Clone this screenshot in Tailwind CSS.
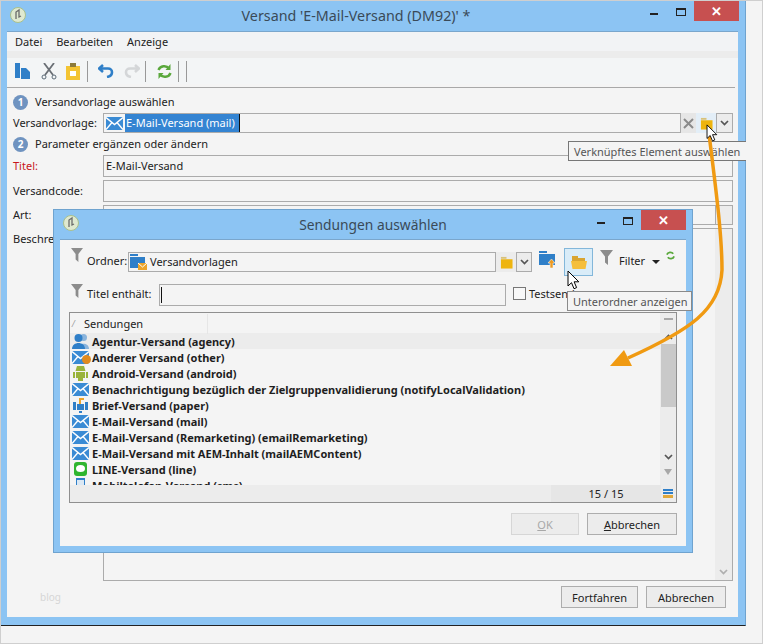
<!DOCTYPE html>
<html lang="de">
<head>
<meta charset="UTF-8">
<title>Versand</title>
<script src="https://cdn.jsdelivr.net/npm/@tailwindcss/browser@4"></script>
</head>
<body class="bg-[#f4f4f4]">
<svg width="0" height="0" class="absolute">
  <defs>
    <symbol id="mail" viewBox="0 0 17 13">
      <rect width="17" height="13" fill="#3a8bd4"/>
      <path d="M0 .5 8.500 7.500 17 .5M0 12.500 6 5.500M17 12.500 11 5.500" fill="none" stroke="#fff" stroke-width="1.400"/>
    </symbol>
    <symbol id="folder" viewBox="0 0 14 14">
      <path d="M1 1h6v2H1z" fill="#d9c27a"/>
      <path d="M1 3.500h12.500V13.500H1z" fill="#eeb40e"/>
    </symbol>
    <symbol id="funnel" viewBox="0 0 13 15">
      <path d="M0 0h13L8 6.500V15L5 12.500V6.500z" fill="#8c8c8c"/>
    </symbol>
    <symbol id="chev" viewBox="0 0 9 6">
      <path d="M1 1l3.500 3.500L8 1" fill="none" stroke="#555" stroke-width="1.700"/>
    </symbol>
    <symbol id="app" viewBox="0 0 16 16">
      <circle cx="8" cy="8" r="7.500" fill="#dfe9d0" stroke="#a9c08c"/>
      <path d="M6 12V5l3-2v7l2-1" fill="none" stroke="#6b6b6b" stroke-width="1.300"/>
    </symbol>
    <symbol id="cursor" viewBox="0 0 13 21">
      <path d="M1 1v15l3.500-3.300 2.500 6 2.600-1.100-2.500-5.800h4.700z" fill="#fff" stroke="#000" stroke-width="1"/>
    </symbol>
  </defs>
</svg>

<div class="relative w-[763px] h-[644px] overflow-hidden bg-[#f4f4f4] font-['Noto_Sans',sans-serif] text-[11px] leading-none text-[#222]">

  <!-- Hauptfenster -->
  <div class="absolute left-0 top-[1px] w-[746px] h-[625px] bg-[#8cc4f3] border-b border-b-[#222] border-r border-r-[#6fa3cf]">
    <div class="relative h-[30px] flex items-center justify-center text-[14.300px] text-[#3a4a58]">
      <svg class="absolute left-[10px] top-[6px] w-[16px] h-[16px]"><use href="#app"/></svg>
      <span class="ml-[-33px]">Versand 'E-Mail-Versand (DM92)' *</span>
      <div class="absolute left-[650px] top-0 flex items-start">
        <div class="w-[8px] h-[2px] bg-[#222] mt-[12px] mr-[18px]"></div>
        <div class="w-[10px] h-[8px] border border-[#222] border-t-2 mt-[7px] mr-[8px]"></div>
        <div class="w-[45px] h-[20px] bg-[#c75050] text-white text-[13px] font-bold flex items-center justify-center">✕</div>
      </div>
    </div>
    <div class="mx-[7px] h-[586px] bg-[#f4f4f4] border-t border-[#7aa6cc] relative">
      <div class="h-[19px] bg-[#f2f3f5] flex items-center gap-[14px] pl-[8px]">
        <span>Datei</span><span>Bearbeiten</span><span>Anzeige</span>
      </div>
      <div class="h-[7px] bg-[#ececec]"></div>
      <div class="h-[26px] bg-[#f3f5f6] flex items-center pl-[8px]">
        <svg class="w-[15px] h-[16px]" viewBox="0 0 15 16"><path d="M0 0h5v15H0zM6 5h5l4 4v7H6z" fill="#2f7fc8"/></svg>
        <svg class="w-[16px] h-[17px] ml-[11px]" viewBox="0 0 16 17"><path d="M3 0l9 12M13 0 4 12" stroke="#6a6f75" stroke-width="1.800" fill="none"/><circle cx="3" cy="14" r="2" fill="none" stroke="#5b6b78"/><circle cx="13" cy="14" r="2" fill="none" stroke="#5b6b78"/></svg>
        <svg class="w-[14px] h-[17px] ml-[9px]" viewBox="0 0 14 17"><path d="M0 3h14v14H0z" fill="#f3c433"/><path d="M4 0h6v4H4z" fill="#8c7a3a"/><path d="M4 8h6v5H4z" fill="#fff"/></svg>
        <div class="w-px h-[21px] bg-[#999] ml-[7px]"></div>
        <svg class="w-[17px] h-[14px] ml-[10px]" viewBox="0 0 17 14"><path d="M5 1 1 4.500 5 8M1.500 4.500H10c5 0 6 7-1 8.500" fill="none" stroke="#2f7fc8" stroke-width="2.600"/></svg>
        <svg class="w-[17px] h-[14px] ml-[8px]" viewBox="0 0 17 14"><path d="M12 1l4 3.500L12 8M15.500 4.500H7c-5 0-6 7 1 8.500" fill="none" stroke="#d4d6d8" stroke-width="2.600"/></svg>
        <div class="w-px h-[21px] bg-[#999] ml-[5px]"></div>
        <svg class="w-[15px] h-[15px] ml-[11px]" viewBox="0 0 15 15"><path d="M1.500 6C3 1.500 9.500 1 12 4.500M13.500 9C12 13.500 5.500 14 3 10.500" fill="none" stroke="#5aa83c" stroke-width="2.400"/><path d="M13.500 0v6h-5zM1.500 15V9h5z" fill="#5aa83c"/></svg>
        <div class="w-px h-[21px] bg-[#999] ml-[6px]"></div>
        <div class="w-px h-[21px] bg-[#999] ml-[7px]"></div>
      </div>
      <div class="h-px bg-[#a8a8a8] mt-[3px] mr-[3px]"></div>

      <div class="flex items-center h-[16px] mt-[6px] pl-[6px]">
        <div class="w-[15px] h-[15px] rounded-full bg-[#6f93c0] text-white font-bold text-[10px] flex items-center justify-center">1</div>
        <span class="ml-[7px] pb-[2px]">Versandvorlage auswählen</span>
      </div>
      <div class="flex items-center h-[20px] mt-[3px] pl-[6px]">
        <span class="w-[90px] pb-[1px]">Versandvorlage:</span>
        <div class="w-[578px] h-[20px] border border-[#ababab] flex items-center pl-[1px]">
          <svg class="w-[17px] h-[13px] ml-[1px]"><use href="#mail"/></svg>
          <span class="bg-[#3484d2] text-white h-[18px] flex items-center ml-[2px] pl-[1px] pr-[4px] pb-[1px] border-r border-[#111]">E-Mail-Versand (mail)</span>
        </div>
        <div class="w-[15px] h-[20px] bg-[#e6e6e6] flex items-center justify-center">
          <svg class="w-[11px] h-[11px]" viewBox="0 0 11 11"><path d="M1 1l9 9M10 1l-9 9" stroke="#8a8a8a" stroke-width="2"/></svg>
        </div>
        <div class="w-[20px] h-[20px] bg-[#e3eef7] flex items-center justify-center">
          <svg class="w-[13px] h-[13px]"><use href="#folder"/></svg>
        </div>
        <div class="w-[17px] h-[20px] bg-[#ececec] border border-[#ababab] flex items-center justify-center">
          <svg class="w-[9px] h-[6px]"><use href="#chev"/></svg>
        </div>
      </div>
      <div class="flex items-center h-[16px] mt-[3px] pl-[6px]">
        <div class="w-[15px] h-[15px] rounded-full bg-[#6f93c0] text-white font-bold text-[10px] flex items-center justify-center">2</div>
        <span class="ml-[7px] pb-[2px]">Parameter ergänzen oder ändern</span>
      </div>
      <div class="flex items-center h-[22px] mt-[3px] pl-[6px]">
        <span class="w-[90px] text-[#c8161d] pb-[2px]">Titel:</span>
        <div class="w-[630px] h-[22px] border border-[#ababab] flex items-center pl-[2px] pb-[2px]">E-Mail-Versand</div>
      </div>
      <div class="flex items-center h-[22px] mt-[3px] pl-[6px]">
        <span class="w-[90px] pb-[2px]">Versandcode:</span>
        <div class="w-[630px] h-[22px] border border-[#ababab]"></div>
      </div>
      <div class="flex items-center h-[20px] mt-[3px] pl-[6px]">
        <span class="w-[90px] pb-[2px]">Art:</span>
        <div class="w-[630px] h-[20px] border border-[#ababab] flex justify-end">
          <div class="w-[17px] bg-[#ececec] border-l border-[#ababab]"></div>
        </div>
      </div>
      <div class="flex items-start mt-[3px] pl-[6px] h-[353px]">
        <span class="w-[90px] mt-[5px]">Beschreibung:</span>
        <div class="w-[630px] h-[353px] border border-[#ababab] flex justify-end">
          <div class="w-[17px] bg-[#ececec] flex flex-col justify-end items-center pb-[5px]">
            <svg class="w-[9px] h-[6px] opacity-40"><use href="#chev"/></svg>
          </div>
        </div>
      </div>
      <div class="flex justify-between mt-[5px] pl-[33px] pr-[12px]">
        <span class="text-[#d6d6d6] mt-[6px] text-[10px]">blog</span>
        <div class="flex gap-[8px]">
          <div class="w-[77px] h-[22px] bg-[#ececec] border border-[#adadad] flex items-center justify-center">Fortfahren</div>
          <div class="w-[80px] h-[22px] bg-[#ececec] border border-[#adadad] flex items-center justify-center">Abbrechen</div>
        </div>
      </div>
    </div>
  </div>

  <!-- Dialog -->
  <div class="absolute left-[53px] top-[209px] w-[640px] h-[344px] bg-[#8cc4f3] border border-[#6fa3cf]">
    <div class="relative h-[29px] flex items-center justify-center text-[13.800px] text-[#3a4a58]">
      <svg class="absolute left-[9px] top-[5px] w-[16px] h-[16px]"><use href="#app"/></svg>
      <span>Sendungen auswählen</span>
      <div class="absolute left-[543px] top-0 flex items-start">
        <div class="w-[8px] h-[2px] bg-[#222] mt-[12px] mr-[18px]"></div>
        <div class="w-[10px] h-[8px] border border-[#222] border-t-2 mt-[7px] mr-[8px]"></div>
        <div class="w-[45px] h-[20px] bg-[#c75050] text-white text-[13px] font-bold flex items-center justify-center">✕</div>
      </div>
    </div>
    <div class="mx-[6px] h-[307px] bg-[#f4f4f4] border-t border-[#7aa6cc] pl-[11px] relative">
      <div class="flex items-start h-[32px] pt-[8px]">
        <svg class="w-[12px] h-[14px] mr-[4px]"><use href="#funnel"/></svg>
        <span class="w-[41px] mt-[7px]">Ordner:</span>
        <div class="w-[368px] h-[20px] mt-[4px] border border-[#ababab] flex items-center pl-[1px]">
          <svg class="w-[17px] h-[16px]" viewBox="0 0 17 16"><path d="M0 0h8v2H0z" fill="#2f7fc8"/><path d="M0 3h15v11H0z" fill="#2f7fc8"/><path d="M8 9h9v7H8z" fill="#eda42a"/><path d="M8 9l4.500 4L17 9" stroke="#fff" fill="none"/></svg>
          <span class="ml-[3px] pb-[2px]">Versandvorlagen</span>
        </div>
        <div class="w-[20px] h-[20px] mt-[4px] bg-[#ececec] flex items-center justify-center">
          <svg class="w-[13px] h-[13px]"><use href="#folder"/></svg>
        </div>
        <div class="w-[16px] h-[20px] mt-[4px] bg-[#ececec] border border-[#ababab] flex items-center justify-center">
          <svg class="w-[9px] h-[6px]"><use href="#chev"/></svg>
        </div>
        <svg class="w-[17px] h-[17px] ml-[7px] mt-[3px]" viewBox="0 0 17 17"><path d="M0 0h8v2H0zM0 3h16v11H0z" fill="#2f7fc8"/><path d="M9 12l3.500-4 3.500 4h-2v5h-3v-5z" fill="#ed9b22" stroke="#f4f4f4" stroke-width=".6"/></svg>
        <div class="w-[29px] h-[28px] ml-[8px] bg-[#d9ecf8] border border-[#83b7da] flex items-center justify-center">
          <svg class="w-[16px] h-[13px]" viewBox="0 0 16 13"><path d="M1 0h6v2H1z" fill="#d9a531"/><path d="M1 2h13v3H1z" fill="#d9a531"/><path d="M0 5h16l-1.500 8h-13z" fill="#f5bf3c"/></svg>
        </div>
        <svg class="w-[13px] h-[15px] ml-[7px] mt-[2px]"><use href="#funnel"/></svg>
        <span class="ml-[6px] mt-[7px]">Filter</span>
        <div class="ml-[7px] mt-[12px] w-0 h-0 border-x-[4px] border-x-transparent border-t-[4px] border-t-[#222]"></div>
        <svg class="w-[9px] h-[9px] ml-[6px] mt-[3px]" viewBox="0 0 15 15"><path d="M1.500 6C3 1.500 9.500 1 12 4.500M13.500 9C12 13.500 5.500 14 3 10.500" fill="none" stroke="#5aa83c" stroke-width="3"/></svg>
      </div>
      <div class="flex items-start h-[40px] pt-[12px]">
        <svg class="w-[12px] h-[14px] mr-[4px]"><use href="#funnel"/></svg>
        <span class="w-[72px] mt-[4px]">Titel enthält:</span>
        <div class="w-[347px] h-[22px] border border-[#ababab] pl-[1px] pt-[2px]">
          <div class="w-px h-[16px] bg-[#111]"></div>
        </div>
        <div class="w-[13px] h-[13px] mt-[3px] ml-[7px] border border-[#777] bg-[#f8f8f8]"></div>
        <span class="ml-[3px] mt-[4px]">Testsendungen</span>
      </div>
      <div class="relative w-[608px] h-[191px] ml-[-2px] border border-[#8f8f8f] overflow-hidden">
        <div class="h-[20px] flex items-center bg-[#f4f4f4] pt-[1px]">
          <span class="text-[8px] text-[#888] ml-[3px] w-[11px]">⁄</span>
          <span class="w-[123px]">Sendungen</span>
          <div class="w-px h-[20px] bg-[#e6e6e6]"></div>
        </div>
        <div class="h-[153px] w-[590px] overflow-hidden font-bold text-[11px] text-[#1e1e1e]">
          <div class="h-[16px] flex items-center bg-[#ececec] pl-[2px]">
            <svg class="w-[17px] h-[16px] mr-[3px]" viewBox="0 0 17 16"><circle cx="11.500" cy="4.500" r="3.500" fill="#8ab4dc"/><path d="M6 16c0-7 11-7 11 0z" fill="#8ab4dc"/><circle cx="6.500" cy="5" r="4" fill="#2f7fc8"/><path d="M0 16c0-8 13-8 13 0z" fill="#2f7fc8"/></svg>
            Agentur-Versand (agency)</div>
          <div class="h-[16px] flex items-center pl-[2px]">
            <span class="relative w-[17px] h-[13px] mr-[3px]"><svg class="w-[17px] h-[13px]"><use href="#mail"/></svg><span class="absolute left-[10px] top-[4px] w-[9px] h-[9px] rounded-full bg-[#e08a1e]"></span></span>
            Anderer Versand (other)</div>
          <div class="h-[16px] flex items-center pl-[2px]">
            <svg class="w-[17px] h-[15px] mr-[3px]" viewBox="0 0 17 15"><path d="M5 0h7l1.500 5h-10z" fill="#9ab43c"/><path d="M4 6h9v6H11v3H6v-3H4zM1 6h2v6H1zM14 6h2v6h-2z" fill="#9ab43c"/></svg>
            Android-Versand (android)</div>
          <div class="h-[16px] flex items-center pl-[2px]">
            <svg class="w-[17px] h-[13px] mr-[3px]"><use href="#mail"/></svg>
            Benachrichtigung bezüglich der Zielgruppenvalidierung (notifyLocalValidation)</div>
          <div class="h-[16px] flex items-center pl-[2px]">
            <svg class="w-[17px] h-[15px] mr-[3px]" viewBox="0 0 17 15"><path d="M1 4h3v8H1zM13 4h3v8h-3zM5 6h7v6H5zM7 13h3v2H7z" fill="#2f7fc8"/><path d="M7 0h5v2H9v4H7z" fill="#eda42a"/></svg>
            Brief-Versand (paper)</div>
          <div class="h-[16px] flex items-center pl-[2px]">
            <svg class="w-[17px] h-[13px] mr-[3px]"><use href="#mail"/></svg>
            E-Mail-Versand (mail)</div>
          <div class="h-[16px] flex items-center pl-[2px]">
            <svg class="w-[17px] h-[13px] mr-[3px]"><use href="#mail"/></svg>
            E-Mail-Versand (Remarketing) (emailRemarketing)</div>
          <div class="h-[16px] flex items-center pl-[2px]">
            <svg class="w-[17px] h-[13px] mr-[3px]"><use href="#mail"/></svg>
            E-Mail-Versand mit AEM-Inhalt (mailAEMContent)</div>
          <div class="h-[16px] flex items-center pl-[2px]">
            <svg class="w-[17px] h-[14px] mr-[3px]" viewBox="0 0 17 14"><rect x="2" width="13" height="14" rx="3" fill="#2eb52e"/><ellipse cx="8.500" cy="6.500" rx="4.500" ry="3.500" fill="#fff"/></svg>
            LINE-Versand (line)</div>
          <div class="h-[16px] flex items-center pl-[2px]">
            <svg class="w-[17px] h-[15px] mr-[3px]" viewBox="0 0 17 15"><rect x="4" width="9" height="15" fill="#2f7fc8"/><rect x="5" y="2" width="7" height="9" fill="#dbe8f4"/></svg>
            Mobiltelefon-Versand (sms)</div>
        </div>
        <div class="absolute right-0 top-0 w-[16px] h-[173px] bg-[#ececec] flex flex-col items-center">
          <div class="w-[9px] h-[8px] mt-[5px] border-t-2 border-[#a8a8a8]"></div>
          <svg class="w-[9px] h-[6px] mt-[8px] rotate-180"><use href="#chev"/></svg>
          <div class="w-[15px] h-[63px] mt-[4px] bg-[#c9c9c9]"></div>
          <svg class="w-[9px] h-[6px] mt-[47px]"><use href="#chev"/></svg>
          <div class="mt-[9px] w-0 h-0 border-x-[4px] border-x-transparent border-t-[6px] border-t-[#a8a8a8]"></div>
        </div>
        <div class="absolute left-0 bottom-0 w-full h-[17px] bg-[#ececec] flex items-center">
          <div class="ml-[481px] w-[110px] h-[17px] bg-[#e6e6e6] flex items-center justify-center">15 / 15</div>
          <div class="ml-[2px] w-[10px] flex flex-col gap-[1px]">
            <div class="h-[2px] bg-[#2f7fc8]"></div>
            <div class="h-[2px] bg-[#2f7fc8]"></div>
            <div class="h-[3px] bg-[#e0a83c]"></div>
          </div>
        </div>
      </div>
      <div class="flex justify-end gap-[8px] mt-[10px] pr-[9px]">
        <div class="w-[68px] h-[22px] bg-[#ececec] border border-[#d6d6d6] text-[#a8a8a8] flex items-center justify-center"><span class="underline">O</span>K</div>
        <div class="w-[90px] h-[22px] bg-[#ececec] border border-[#adadad] flex items-center justify-center"><span class="underline">A</span>bbrechen</div>
      </div>
    </div>
  </div>

  <!-- Tooltips -->
  <div class="absolute left-[568px] top-[141px] w-[178px] h-[20px] bg-[#f4f4f4] border border-[#777] border-r-0 flex items-center pl-[5px] text-[#555] whitespace-nowrap">Verknüpftes Element auswählen</div>
  <div class="absolute left-[567px] top-[291px] w-[125px] h-[20px] bg-[#f4f4f4] border border-[#8a8a8a] flex items-center pl-[5px] text-[#555] whitespace-nowrap">Unterordner anzeigen</div>

  <!-- Pfeil und Mauszeiger -->
  <svg class="absolute left-0 top-0 w-[763px] h-[644px] pointer-events-none" viewBox="0 0 763 644">
    <path d="M709 134C716 190 722 235 722 270C720 310 690 330 628 358" fill="none" stroke="#f09a12" stroke-width="3.500"/>
    <path d="M610 366 624 350 632 366z" fill="#f09a12"/>
  </svg>
  <svg class="absolute left-[706px] top-[124px] w-[12px] h-[19px]"><use href="#cursor"/></svg>
  <svg class="absolute left-[567px] top-[270px] w-[13px] h-[21px]"><use href="#cursor"/></svg>
  <div class="absolute inset-0 border border-[#cfcfcf] pointer-events-none"></div>
</div>
</body>
</html>
